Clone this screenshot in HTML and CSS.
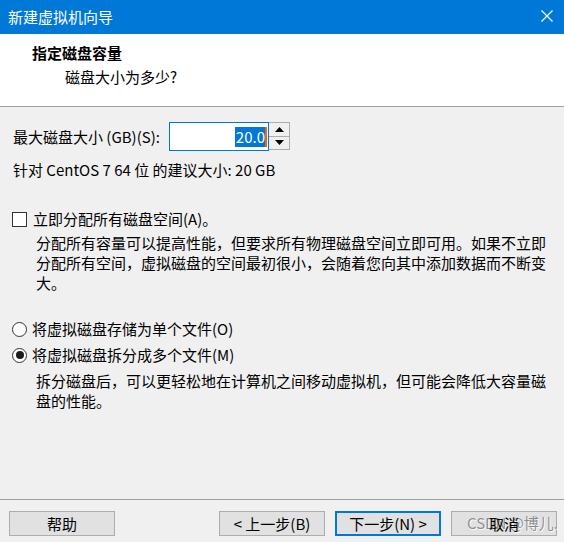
FILE: index.html
```html
<!DOCTYPE html>
<html lang="zh-CN">
<head>
<meta charset="utf-8">
<title>新建虚拟机向导</title>
<link rel="stylesheet" href="styles.css">
</head>
<body>
<div class="dialog">
  <div class="titlebar">
    <span class="title">新建虚拟机向导</span>
    <svg class="close" width="12" height="12" viewBox="0 0 12 12"><path d="M0.5 0.5 L11.5 11.5 M11.5 0.5 L0.5 11.5" stroke="#fff" stroke-width="1.2" fill="none"/></svg>
  </div>
  <div class="header">
    <div class="h-title">指定磁盘容量</div>
    <div class="h-sub">磁盘大小为多少?</div>
  </div>
  <div class="content">
    <div class="size-row">
      <span class="size-label">最大磁盘大小 (GB)(S):</span>
      <div class="input"><span class="sel">20.0</span><span class="caret"></span></div>
      <div class="spinner">
        <div class="spin up"><svg width="9" height="5" viewBox="0 0 9 5"><path d="M4.5 0 L9 5 L0 5 Z" fill="#000"/></svg></div>
        <div class="spin down"><svg width="9" height="5" viewBox="0 0 9 5"><path d="M0 0 L9 0 L4.5 5 Z" fill="#000"/></svg></div>
      </div>
    </div>
    <div class="recommend">针对 CentOS 7 64 位 的建议大小: 20 GB</div>
    <div class="opt check-row">
      <span class="checkbox"></span>
      <span>立即分配所有磁盘空间(A)。</span>
    </div>
    <div class="desc desc1">分配所有容量可以提高性能，但要求所有物理磁盘空间立即可用。如果不立即分配所有空间，虚拟磁盘的空间最初很小，会随着您向其中添加数据而不断变大。</div>
    <div class="opt radio-row1">
      <span class="radio"></span>
      <span>将虚拟磁盘存储为单个文件(O)</span>
    </div>
    <div class="opt radio-row2">
      <span class="radio checked"></span>
      <span>将虚拟磁盘拆分成多个文件(M)</span>
    </div>
    <div class="desc desc2">拆分磁盘后，可以更轻松地在计算机之间移动虚拟机，但可能会降低大容量磁盘的性能。</div>
  </div>
  <div class="footer">
    <button class="btn">帮助</button>
    <div class="right-btns">
      <button class="btn">&lt; 上一步(B)</button>
      <button class="btn primary">下一步(N) &gt;</button>
      <button class="btn cancel"><span class="watermark">CSDN @博儿.</span><span class="cancel-text">取消</span></button>
    </div>
  </div>
</div>
</body>
</html>
```

FILE: styles.css
```css
html, body {
  margin: 0;
  padding: 0;
}
body {
  width: 564px;
  height: 542px;
  overflow: hidden;
  background: #f0f0f0;
  font-family: "Noto Sans CJK SC", "Microsoft YaHei", sans-serif;
  font-size: 15px;
  color: #000;
}
.dialog {
  display: flex;
  flex-direction: column;
  height: 542px;
}
.titlebar {
  height: 34px;
  background: #0078d7;
  color: #fff;
  display: flex;
  align-items: center;
  justify-content: space-between;
  padding: 0 11px 0 8px;
  flex: none;
}
.title {
  line-height: 20px;
  margin-top: -1px;
}
.close {
  display: block;
  margin-top: -2px;
}
.header {
  height: 72px;
  background: #fff;
  border-bottom: 1px solid #a0a0a0;
  flex: none;
}
.h-title {
  font-weight: bold;
  padding-left: 32px;
  margin-top: 9px;
  line-height: 20px;
}
.h-sub {
  padding-left: 65px;
  margin-top: 4px;
  line-height: 20px;
}
.content {
  padding-left: 13px;
  flex: 1;
}
.size-row {
  display: flex;
  align-items: flex-start;
  margin-top: 15px;
  height: 29px;
}
.size-label {
  width: 156px;
  line-height: 20px;
  margin-top: 5px;
}
.input {
  box-sizing: border-box;
  width: 100px;
  height: 29px;
  border: 1px solid #0078d7;
  background: #fff;
  display: flex;
  justify-content: flex-end;
  align-items: center;
  padding-right: 1px;
}
.sel {
  background: #0078d7;
  color: #fff;
  line-height: 20px;
  padding: 0 0 0 1px;
}
.caret {
  width: 2px;
  height: 20px;
  background: #f7630c;
}
.spinner {
  box-sizing: border-box;
  width: 21px;
  height: 28px;
  border: 1px solid #adadad;
  border-left: none;
  display: flex;
  flex-direction: column;
  background: #f0f0f0;
}
.spin {
  flex: 1;
  display: flex;
  align-items: center;
  justify-content: center;
}
.spin svg {
  display: block;
}
.spin.up {
  border-bottom: 1px solid #adadad;
}
.recommend {
  margin-top: 9px;
  line-height: 20px;
}
.opt {
  display: flex;
  align-items: center;
  line-height: 20px;
}
.check-row {
  margin-top: 29px;
}
.checkbox {
  box-sizing: border-box;
  width: 15px;
  height: 15px;
  border: 1px solid #333;
  background: #fff;
  margin-left: -1px;
  margin-right: 6px;
  flex: none;
}
.desc {
  padding-left: 23px;
  width: 515px;
  line-height: 20px;
  margin-top: 4px;
}
.radio-row1 {
  margin-top: 26px;
}
.radio-row2 {
  margin-top: 6px;
}
.radio {
  box-sizing: border-box;
  width: 15px;
  height: 15px;
  border: 1px solid #333;
  border-radius: 50%;
  background: #fff;
  margin-left: -1px;
  margin-right: 5px;
  flex: none;
  display: flex;
  align-items: center;
  justify-content: center;
}
.radio.checked::after {
  content: "";
  width: 8px;
  height: 8px;
  border-radius: 50%;
  background: #1a1a1a;
}
.desc2 {
  margin-top: 6px;
}
.footer {
  flex: none;
  border-top: 1px solid #a0a0a0;
  display: flex;
  justify-content: space-between;
  padding: 11px 7px 6px 9px;
}
.right-btns {
  display: flex;
  gap: 10px;
}
.btn {
  box-sizing: border-box;
  width: 106px;
  height: 25px;
  background: #e1e1e1;
  border: 1px solid #adadad;
  font-family: inherit;
  font-size: 15px;
  color: #000;
  padding: 0;
  line-height: 20px;
  position: relative;
}
.btn.primary {
  border: 2px solid #0078d7;
}
.cancel-text {
  position: relative;
}
.watermark {
  position: absolute;
  left: 15px;
  top: 1px;
  color: rgba(110, 110, 110, 0.8);
  text-shadow: 0 0 1px #fff, 1px 1px 0 rgba(255,255,255,0.8);
  white-space: nowrap;
  font-size: 15px;
}
```
